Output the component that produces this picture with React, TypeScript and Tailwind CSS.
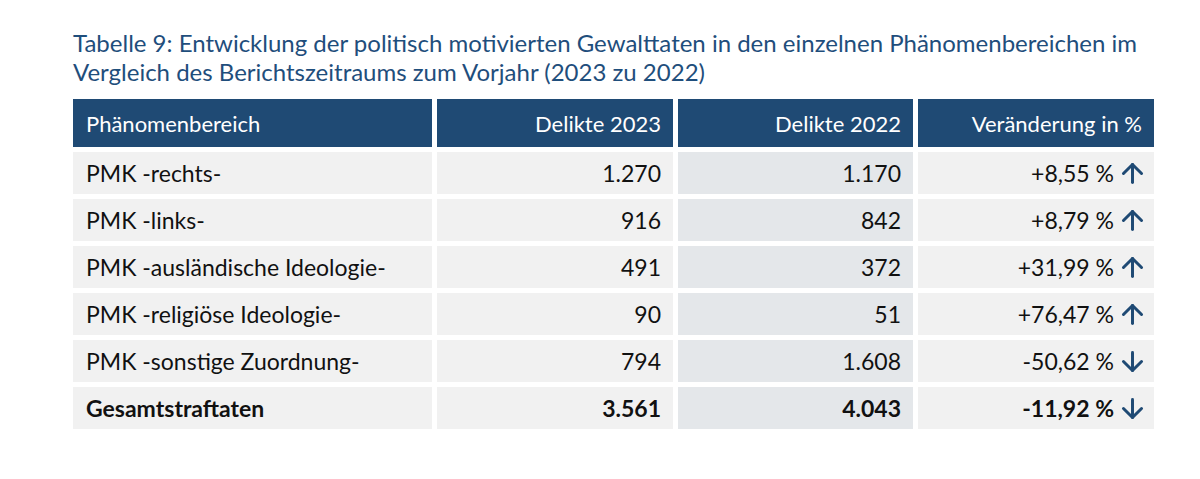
import React from 'react';
import { ArrowUp, ArrowDown } from 'lucide-react';

const rows = [
    { name: 'PMK -rechts-', a: '1.270', b: '1.170', change: '+8,55 %', up: true },
    { name: 'PMK -links-', a: '916', b: '842', change: '+8,79 %', up: true },
    { name: 'PMK -ausländische Ideologie-', a: '491', b: '372', change: '+31,99 %', up: true },
    { name: 'PMK -religiöse Ideologie-', a: '90', b: '51', change: '+76,47 %', up: true },
    { name: 'PMK -sonstige Zuordnung-', a: '794', b: '1.608', change: '-50,62 %', up: false },
];

function ChangeCell({ value, up, bold }: { value: string; up: boolean; bold?: boolean }) {
    const Icon = up ? ArrowUp : ArrowDown;
    return (
        <div className={`h-[42px] bg-[#f1f1f1] flex items-center justify-end pr-[6px] gap-[3px] ${bold ? 'font-bold' : ''}`}>
            <span>{value}</span>
            <Icon className="w-[31px] h-[31px] text-[#1f4a74]" strokeWidth={2.3} />
        </div>
    );
}

export default function App() {
    return (
        <div className="w-[1200px] h-[479px] bg-white font-['Lato',sans-serif] text-[#111]">
            <div className="pl-[73px] pt-[28px]">
                <h1 className="text-[#1f4e7c] text-[24px] leading-[29px]">
                    Tabelle 9: Entwicklung der politisch motivierten Gewalttaten in den einzelnen Phänomenbereichen im
                    <br />
                    Vergleich des Berichtszeitraums zum Vorjahr (2023 zu 2022)
                </h1>

                <div className="mt-[13px] grid grid-cols-[359px_236px_235px_236px] gap-x-[5px] gap-y-[5px] text-[23px]">
                    <div className="h-[48px] bg-[#1f4a74] text-white flex items-center pl-[13px] text-[22px]">Phänomenbereich</div>
                    <div className="h-[48px] bg-[#1f4a74] text-white flex items-center justify-end pr-[12px] text-[22px]">Delikte 2023</div>
                    <div className="h-[48px] bg-[#1f4a74] text-white flex items-center justify-end pr-[12px] text-[22px]">Delikte 2022</div>
                    <div className="h-[48px] bg-[#1f4a74] text-white flex items-center justify-end pr-[12px] text-[22px]">Veränderung in %</div>

                    {rows.map((r) => (
                        <React.Fragment key={r.name}>
                            <div className="h-[42px] bg-[#f1f1f1] flex items-center pl-[13px]">{r.name}</div>
                            <div className="h-[42px] bg-[#f1f1f1] flex items-center justify-end pr-[12px]">{r.a}</div>
                            <div className="h-[42px] bg-[#e4e7ea] flex items-center justify-end pr-[12px]">{r.b}</div>
                            <ChangeCell value={r.change} up={r.up} />
                        </React.Fragment>
                    ))}

                    <div className="h-[42px] bg-[#f1f1f1] flex items-center pl-[13px] font-bold">Gesamtstraftaten</div>
                    <div className="h-[42px] bg-[#f1f1f1] flex items-center justify-end pr-[12px] font-bold">3.561</div>
                    <div className="h-[42px] bg-[#e4e7ea] flex items-center justify-end pr-[12px] font-bold">4.043</div>
                    <ChangeCell value="-11,92 %" up={false} bold />
                </div>
            </div>
        </div>
    );
}
